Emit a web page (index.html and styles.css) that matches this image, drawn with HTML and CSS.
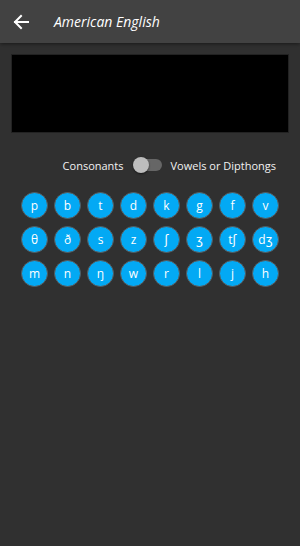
FILE: index.html
```html
<!DOCTYPE html>
<html lang="en">
<head>
  <meta charset="UTF-8">
  <title>American English</title>
  <link rel="stylesheet" href="styles.css">
</head>
<body>
  <div class="app">
    <header class="toolbar">
      <button class="back-button" aria-label="Back">
        <svg width="16" height="16" viewBox="0 0 16 16">
          <path d="M15 8H2M8 2L2 8l6 6" fill="none" stroke="#fff" stroke-width="2" stroke-linecap="square"/>
        </svg>
      </button>
      <h1 class="title">American English</h1>
    </header>

    <div class="video-box"></div>

    <div class="switch-row">
      <span class="switch-label">Consonants</span>
      <span class="switch">
        <span class="switch-track"></span>
        <span class="switch-thumb"></span>
      </span>
      <span class="switch-label">Vowels or Dipthongs</span>
    </div>

    <div class="sound-grid">
      <button class="sound">p</button>
      <button class="sound">b</button>
      <button class="sound">t</button>
      <button class="sound">d</button>
      <button class="sound">k</button>
      <button class="sound">g</button>
      <button class="sound">f</button>
      <button class="sound">v</button>
      <button class="sound">θ</button>
      <button class="sound">ð</button>
      <button class="sound">s</button>
      <button class="sound">z</button>
      <button class="sound">ʃ</button>
      <button class="sound">ʒ</button>
      <button class="sound">tʃ</button>
      <button class="sound">dʒ</button>
      <button class="sound">m</button>
      <button class="sound">n</button>
      <button class="sound">ŋ</button>
      <button class="sound">w</button>
      <button class="sound">r</button>
      <button class="sound">l</button>
      <button class="sound">j</button>
      <button class="sound">h</button>
    </div>
  </div>
</body>
</html>
```

FILE: styles.css
```css
html, body {
  margin: 0;
  height: 100%;
}

body {
  font-family: "Open Sans", "Noto Sans", sans-serif;
  background: #303030;
  color: #fff;
}

.app {
  min-height: 100%;
}

.toolbar {
  height: 43px;
  background: #424242;
  display: flex;
  align-items: center;
  box-shadow: 0 1px 4px rgba(0,0,0,0.5);
  position: relative;
}

.back-button {
  background: none;
  border: none;
  padding: 0;
  margin-left: 13px;
  width: 16px;
  height: 16px;
  display: flex;
}

.title {
  margin: 0 0 0 25px;
  font-size: 14px;
  font-weight: normal;
  font-style: italic;
  color: #fff;
}

.video-box {
  margin: 11px 11px 0 11px;
  height: 77px;
  background: #000;
  border: 1px solid #222;
}

.switch-row {
  display: flex;
  justify-content: flex-end;
  align-items: center;
  gap: 9px;
  padding: 0 24px 0 0;
  margin-top: 22px;
  height: 20px;
  font-size: 11px;
  color: #f2f2f2;
}

.switch {
  position: relative;
  width: 29px;
  height: 16px;
  display: block;
}

.switch-track {
  position: absolute;
  left: 5px;
  top: 2px;
  width: 24px;
  height: 12px;
  border-radius: 6px;
  background: #666;
}

.switch-thumb {
  position: absolute;
  left: 0;
  top: 0;
  width: 16px;
  height: 16px;
  border-radius: 50%;
  background: #bdbdbd;
  box-shadow: 0 1px 2px rgba(0,0,0,0.5);
}

.sound-grid {
  display: grid;
  grid-template-columns: repeat(8, 27px);
  gap: 7px 6px;
  justify-content: center;
  margin-top: 17px;
}

.sound {
  width: 27px;
  height: 27px;
  border-radius: 50%;
  border: 1px solid #5a5a5a;
  background: #03a9f4;
  color: #fff;
  font-family: "Open Sans", "DejaVu Sans", sans-serif;
  font-size: 12px;
  padding: 0;
  display: flex;
  align-items: center;
  justify-content: center;
}
```
